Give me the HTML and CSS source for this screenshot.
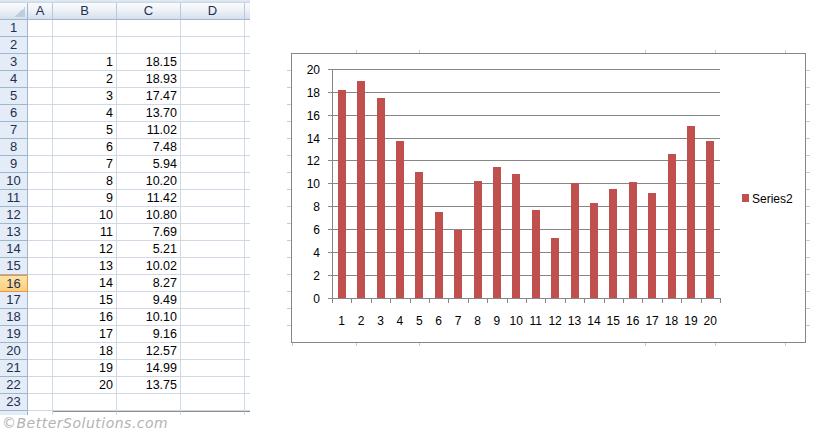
FILE: index.html
```html
<!DOCTYPE html>
<html>
<head>
<meta charset="utf-8">
<link rel="stylesheet" href="styles.css">
</head>
<body>
<div class="page">
  <div class="left">
    <div class="sheet">
      <div class="strip"></div>
      <div class="row hrow">
        <div class="hc corner"><span class="tri"></span></div>
        <div class="hc a">A</div>
        <div class="hc b">B</div>
        <div class="hc cc">C</div>
        <div class="hc d">D</div>
        <div class="hc e"></div>
      </div>
      <div class="row"><div class="rh">1</div><div class="c a"></div><div class="c b"></div><div class="c cc"></div><div class="c d"></div><div class="c e"></div></div>
      <div class="row"><div class="rh">2</div><div class="c a"></div><div class="c b"></div><div class="c cc"></div><div class="c d"></div><div class="c e"></div></div>
      <div class="row"><div class="rh">3</div><div class="c a"></div><div class="c b">1</div><div class="c cc">18.15</div><div class="c d"></div><div class="c e"></div></div>
      <div class="row"><div class="rh">4</div><div class="c a"></div><div class="c b">2</div><div class="c cc">18.93</div><div class="c d"></div><div class="c e"></div></div>
      <div class="row"><div class="rh">5</div><div class="c a"></div><div class="c b">3</div><div class="c cc">17.47</div><div class="c d"></div><div class="c e"></div></div>
      <div class="row"><div class="rh">6</div><div class="c a"></div><div class="c b">4</div><div class="c cc">13.70</div><div class="c d"></div><div class="c e"></div></div>
      <div class="row"><div class="rh">7</div><div class="c a"></div><div class="c b">5</div><div class="c cc">11.02</div><div class="c d"></div><div class="c e"></div></div>
      <div class="row"><div class="rh">8</div><div class="c a"></div><div class="c b">6</div><div class="c cc">7.48</div><div class="c d"></div><div class="c e"></div></div>
      <div class="row"><div class="rh">9</div><div class="c a"></div><div class="c b">7</div><div class="c cc">5.94</div><div class="c d"></div><div class="c e"></div></div>
      <div class="row"><div class="rh">10</div><div class="c a"></div><div class="c b">8</div><div class="c cc">10.20</div><div class="c d"></div><div class="c e"></div></div>
      <div class="row"><div class="rh">11</div><div class="c a"></div><div class="c b">9</div><div class="c cc">11.42</div><div class="c d"></div><div class="c e"></div></div>
      <div class="row"><div class="rh">12</div><div class="c a"></div><div class="c b">10</div><div class="c cc">10.80</div><div class="c d"></div><div class="c e"></div></div>
      <div class="row"><div class="rh">13</div><div class="c a"></div><div class="c b">11</div><div class="c cc">7.69</div><div class="c d"></div><div class="c e"></div></div>
      <div class="row"><div class="rh">14</div><div class="c a"></div><div class="c b">12</div><div class="c cc">5.21</div><div class="c d"></div><div class="c e"></div></div>
      <div class="row"><div class="rh">15</div><div class="c a"></div><div class="c b">13</div><div class="c cc">10.02</div><div class="c d"></div><div class="c e"></div></div>
      <div class="row"><div class="rh sel">16</div><div class="c a"></div><div class="c b">14</div><div class="c cc">8.27</div><div class="c d"></div><div class="c e"></div></div>
      <div class="row"><div class="rh">17</div><div class="c a"></div><div class="c b">15</div><div class="c cc">9.49</div><div class="c d"></div><div class="c e"></div></div>
      <div class="row"><div class="rh">18</div><div class="c a"></div><div class="c b">16</div><div class="c cc">10.10</div><div class="c d"></div><div class="c e"></div></div>
      <div class="row"><div class="rh">19</div><div class="c a"></div><div class="c b">17</div><div class="c cc">9.16</div><div class="c d"></div><div class="c e"></div></div>
      <div class="row"><div class="rh">20</div><div class="c a"></div><div class="c b">18</div><div class="c cc">12.57</div><div class="c d"></div><div class="c e"></div></div>
      <div class="row"><div class="rh">21</div><div class="c a"></div><div class="c b">19</div><div class="c cc">14.99</div><div class="c d"></div><div class="c e"></div></div>
      <div class="row"><div class="rh">22</div><div class="c a"></div><div class="c b">20</div><div class="c cc">13.75</div><div class="c d"></div><div class="c e"></div></div>
      <div class="row"><div class="rh">23</div><div class="c a"></div><div class="c b"></div><div class="c cc"></div><div class="c d"></div><div class="c e"></div></div>
      <div class="row last"><div class="rh"></div><div class="c a"></div><div class="c b"></div><div class="c cc"></div><div class="c d"></div><div class="c e"></div></div>
    </div>
    <div class="wm">©BetterSolutions.com</div>
  </div>
  <div class="chartwrap">
    <svg class="chart" width="530" height="304" viewBox="284 46 530 304" xmlns="http://www.w3.org/2000/svg">
      <g stroke="#c9c9de" stroke-width="1" shape-rendering="crispEdges">
        <line x1="356.5" y1="50" x2="356.5" y2="53"/><line x1="419.5" y1="50" x2="419.5" y2="53"/>
        <line x1="645.5" y1="50" x2="645.5" y2="53"/><line x1="715.5" y1="50" x2="715.5" y2="53"/><line x1="785.5" y1="50" x2="785.5" y2="53"/>
        <line x1="292.5" y1="343" x2="292.5" y2="346"/><line x1="356.5" y1="343" x2="356.5" y2="346"/><line x1="419.5" y1="343" x2="419.5" y2="346"/>
        <line x1="645.5" y1="343" x2="645.5" y2="346"/><line x1="715.5" y1="343" x2="715.5" y2="346"/><line x1="785.5" y1="343" x2="785.5" y2="346"/>
        <line x1="287" y1="70.5" x2="291" y2="70.5"/><line x1="287" y1="87.5" x2="291" y2="87.5"/><line x1="287" y1="104.5" x2="291" y2="104.5"/>
        <line x1="287" y1="121.5" x2="291" y2="121.5"/><line x1="287" y1="138.5" x2="291" y2="138.5"/><line x1="287" y1="155.5" x2="291" y2="155.5"/>
        <line x1="287" y1="172.5" x2="291" y2="172.5"/><line x1="287" y1="189.5" x2="291" y2="189.5"/><line x1="287" y1="206.5" x2="291" y2="206.5"/>
        <line x1="287" y1="223.5" x2="291" y2="223.5"/><line x1="287" y1="240.5" x2="291" y2="240.5"/><line x1="287" y1="257.5" x2="291" y2="257.5"/>
        <line x1="287" y1="274.5" x2="291" y2="274.5"/><line x1="287" y1="291.5" x2="291" y2="291.5"/><line x1="287" y1="308.5" x2="291" y2="308.5"/>
        <line x1="287" y1="325.5" x2="291" y2="325.5"/>
        <line x1="806" y1="70.5" x2="810" y2="70.5"/><line x1="806" y1="87.5" x2="810" y2="87.5"/><line x1="806" y1="104.5" x2="810" y2="104.5"/>
        <line x1="806" y1="121.5" x2="810" y2="121.5"/><line x1="806" y1="138.5" x2="810" y2="138.5"/><line x1="806" y1="155.5" x2="810" y2="155.5"/>
        <line x1="806" y1="172.5" x2="810" y2="172.5"/><line x1="806" y1="189.5" x2="810" y2="189.5"/><line x1="806" y1="206.5" x2="810" y2="206.5"/>
        <line x1="806" y1="223.5" x2="810" y2="223.5"/><line x1="806" y1="240.5" x2="810" y2="240.5"/><line x1="806" y1="257.5" x2="810" y2="257.5"/>
        <line x1="806" y1="274.5" x2="810" y2="274.5"/><line x1="806" y1="291.5" x2="810" y2="291.5"/><line x1="806" y1="308.5" x2="810" y2="308.5"/>
        <line x1="806" y1="325.5" x2="810" y2="325.5"/>
      </g>
      <rect x="291.5" y="53.5" width="514" height="289" fill="#fff" stroke="#868686" stroke-width="1"/>
      <g stroke="#868686" stroke-width="1" shape-rendering="crispEdges">
        <line x1="328" y1="69.5" x2="720" y2="69.5"/>
        <line x1="328" y1="92.5" x2="720" y2="92.5"/>
        <line x1="328" y1="115.5" x2="720" y2="115.5"/>
        <line x1="328" y1="138.5" x2="720" y2="138.5"/>
        <line x1="328" y1="160.5" x2="720" y2="160.5"/>
        <line x1="328" y1="183.5" x2="720" y2="183.5"/>
        <line x1="328" y1="206.5" x2="720" y2="206.5"/>
        <line x1="328" y1="229.5" x2="720" y2="229.5"/>
        <line x1="328" y1="252.5" x2="720" y2="252.5"/>
        <line x1="328" y1="275.5" x2="720" y2="275.5"/>
        <line x1="332.5" y1="69" x2="332.5" y2="298"/>
      </g>
      <g fill="#c0504d" shape-rendering="crispEdges">
        <rect x="338" y="90" width="8" height="208"/>
        <rect x="357" y="81" width="8" height="217"/>
        <rect x="377" y="98" width="8" height="200"/>
        <rect x="396" y="141" width="8" height="157"/>
        <rect x="415" y="172" width="8" height="126"/>
        <rect x="435" y="212" width="8" height="86"/>
        <rect x="454" y="230" width="8" height="68"/>
        <rect x="474" y="181" width="8" height="117"/>
        <rect x="493" y="167" width="8" height="131"/>
        <rect x="512" y="174" width="8" height="124"/>
        <rect x="532" y="210" width="8" height="88"/>
        <rect x="551" y="238" width="8" height="60"/>
        <rect x="571" y="183" width="8" height="115"/>
        <rect x="590" y="203" width="8" height="95"/>
        <rect x="609" y="189" width="8" height="109"/>
        <rect x="629" y="182" width="8" height="116"/>
        <rect x="648" y="193" width="8" height="105"/>
        <rect x="668" y="154" width="8" height="144"/>
        <rect x="687" y="126" width="8" height="172"/>
        <rect x="706" y="141" width="8" height="157"/>
      </g>
      <g stroke="#868686" stroke-width="1" shape-rendering="crispEdges">
        <line x1="328" y1="298.5" x2="720" y2="298.5"/>
        <line x1="332.5" y1="298" x2="332.5" y2="303"/>
        <line x1="351.5" y1="298" x2="351.5" y2="303"/>
        <line x1="371.5" y1="298" x2="371.5" y2="303"/>
        <line x1="390.5" y1="298" x2="390.5" y2="303"/>
        <line x1="410.5" y1="298" x2="410.5" y2="303"/>
        <line x1="429.5" y1="298" x2="429.5" y2="303"/>
        <line x1="448.5" y1="298" x2="448.5" y2="303"/>
        <line x1="468.5" y1="298" x2="468.5" y2="303"/>
        <line x1="487.5" y1="298" x2="487.5" y2="303"/>
        <line x1="507.5" y1="298" x2="507.5" y2="303"/>
        <line x1="526.5" y1="298" x2="526.5" y2="303"/>
        <line x1="545.5" y1="298" x2="545.5" y2="303"/>
        <line x1="565.5" y1="298" x2="565.5" y2="303"/>
        <line x1="584.5" y1="298" x2="584.5" y2="303"/>
        <line x1="604.5" y1="298" x2="604.5" y2="303"/>
        <line x1="623.5" y1="298" x2="623.5" y2="303"/>
        <line x1="642.5" y1="298" x2="642.5" y2="303"/>
        <line x1="662.5" y1="298" x2="662.5" y2="303"/>
        <line x1="681.5" y1="298" x2="681.5" y2="303"/>
        <line x1="701.5" y1="298" x2="701.5" y2="303"/>
        <line x1="720.5" y1="298" x2="720.5" y2="303"/>
      </g>
      <g class="ylab" text-anchor="end">
        <text x="320" y="74">20</text>
        <text x="320" y="97">18</text>
        <text x="320" y="120">16</text>
        <text x="320" y="143">14</text>
        <text x="320" y="165">12</text>
        <text x="320" y="188">10</text>
        <text x="320" y="211">8</text>
        <text x="320" y="234">6</text>
        <text x="320" y="257">4</text>
        <text x="320" y="280">2</text>
        <text x="320" y="303">0</text>
      </g>
      <g class="xlab" text-anchor="middle">
        <text x="341.7" y="325">1</text>
        <text x="361.1" y="325">2</text>
        <text x="380.5" y="325">3</text>
        <text x="399.9" y="325">4</text>
        <text x="419.3" y="325">5</text>
        <text x="438.7" y="325">6</text>
        <text x="458.1" y="325">7</text>
        <text x="477.5" y="325">8</text>
        <text x="496.9" y="325">9</text>
        <text x="516.3" y="325">10</text>
        <text x="535.7" y="325">11</text>
        <text x="555.1" y="325">12</text>
        <text x="574.5" y="325">13</text>
        <text x="593.9" y="325">14</text>
        <text x="613.3" y="325">15</text>
        <text x="632.7" y="325">16</text>
        <text x="652.1" y="325">17</text>
        <text x="671.5" y="325">18</text>
        <text x="690.9" y="325">19</text>
        <text x="710.3" y="325">20</text>
      </g>
      <rect x="742" y="194" width="7" height="8" fill="#c0504d"/>
      <text class="legend" x="752" y="202.5">Series2</text>
    </svg>
  </div>
</div>
</body>
</html>
```
FILE: styles.css
```css
* { box-sizing: border-box; }
body { margin: 0; background: #fff; font-family: "Liberation Sans", Arial, sans-serif; }
.page { display: flex; width: 815px; height: 431px; overflow: hidden; }
.left { width: 250px; flex: none; display: flex; flex-direction: column; }
.sheet { height: 415px; overflow: hidden; }
.strip { height: 3px; background: linear-gradient(#e6edf5, #c8d5e4); }
.row { display: flex; height: 17px; }
.hc {
  height: 17px;
  background: linear-gradient(#f9fcfd 0%, #eef2f8 45%, #d6dfec 100%);
  border-right: 1px solid #b9c9da;
  border-bottom: 1px solid #9eb6ce;
  text-align: center;
  font-size: 13px;
  line-height: 16px;
  color: #1e2f50;
}
.corner { width: 28px; display: flex; align-items: flex-end; justify-content: flex-end; padding: 0 2px 2px 0; border-right-color: #9eb6ce; }
.tri { width: 10px; height: 10px; background: linear-gradient(135deg, transparent 50%, #bfcde0 50%); }
.rh {
  width: 28px;
  flex: none;
  background: #e4ecf7;
  border-right: 1px solid #9eb6ce;
  border-bottom: 1px solid #9eb6ce;
  text-align: center;
  font-size: 13px;
  line-height: 16px;
  color: #1e2f50;
}
.rh.sel {
  background: linear-gradient(#fde3a6, #f9cf82);
  border: 1px solid #f29536;
  border-left: none;
  line-height: 15px;
}
.c {
  flex: none;
  border-right: 1px solid #d0d7e5;
  border-bottom: 1px solid #d0d7e5;
  text-align: right;
  padding-right: 3px;
  font-size: 12.5px;
  line-height: 16px;
  color: #000;
}
.a { width: 25px; flex: none; }
.b, .cc, .d { width: 64px; flex: none; }
.e { width: 5px; flex: none; border-right: none; }
.last .b, .last .cc, .last .d, .last .e { border-top: 1px solid #8c8c8c; }
.wm {
  height: 16px;
  padding-left: 2px;
  font-family: "DejaVu Sans", sans-serif;
  font-style: italic;
  font-size: 14px;
  line-height: 16px;
  letter-spacing: 0.5px;
  color: #b3b3b3;
  white-space: nowrap;
}
.chartwrap { flex: none; padding: 46px 0 0 34px; }
.chart { display: block; }
.chart text { font-family: "Liberation Sans", Arial, sans-serif; font-size: 12px; fill: #000; }
```
